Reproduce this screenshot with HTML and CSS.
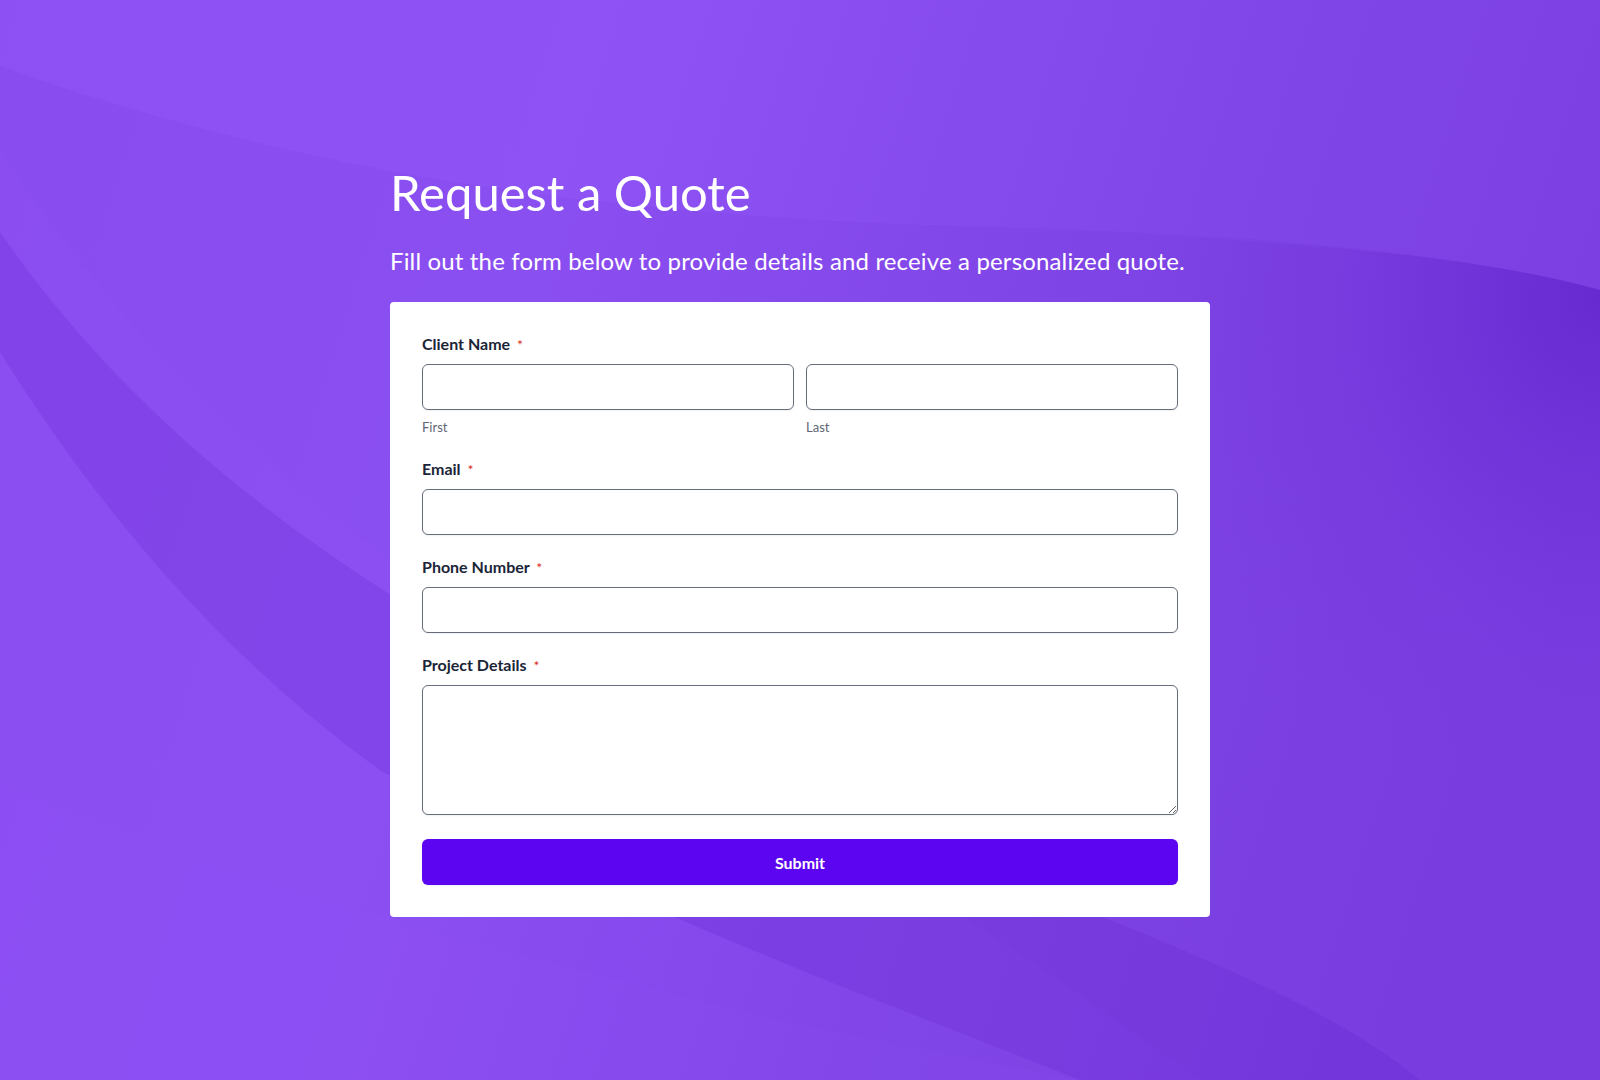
FILE: index.html
```html
<!DOCTYPE html>
<html lang="en">
<head>
    <meta charset="UTF-8">
    <title>Request a Quote</title>
    <link rel="stylesheet" href="styles.css">
</head>
<body>
    <!-- wavy purple backdrop, sits behind the page -->
    <svg class="backdrop" viewBox="0 0 1600 1080" preserveAspectRatio="none" aria-hidden="true">
        <defs>
            <linearGradient id="base" gradientUnits="userSpaceOnUse" x1="0" y1="0" x2="1600" y2="500">
                <stop offset="0" stop-color="#8d50f3"/>
                <stop offset="0.35" stop-color="#8f53f5"/>
                <stop offset="0.7" stop-color="#8247e8"/>
                <stop offset="1" stop-color="#7b3fe1"/>
            </linearGradient>
            <radialGradient id="rightGlow" gradientUnits="userSpaceOnUse" cx="1600" cy="300" r="520">
                <stop offset="0" stop-color="#6123cc" stop-opacity="0.75"/>
                <stop offset="0.5" stop-color="#6b2dd5" stop-opacity="0.3"/>
                <stop offset="1" stop-color="#7a3ee0" stop-opacity="0"/>
            </radialGradient>
        </defs>
        <rect width="1600" height="1080" fill="url(#base)"/>
        <!-- broad darker sweep under the top curve -->
        <path d="M0,66 C260,160 560,215 960,226 C1260,234 1460,252 1600,290 L1600,1080 L0,1080 Z" fill="#5a1cc4" opacity="0.07"/>
        <path d="M800,224 C1260,234 1460,252 1600,290 L1600,1080 L800,1080 Z" fill="url(#rightGlow)"/>
        <!-- light ribbon along the left edge -->
        <path d="M0,150 C120,330 260,470 420,580 C640,720 900,860 1200,1080 L0,1080 Z" fill="#9a5cff" opacity="0.10"/>
        <!-- dark diagonal band running from the left edge to the bottom -->
        <path d="M0,232 C150,450 400,640 800,800 C1050,900 1300,980 1420,1080 L1080,1080 C880,1000 600,900 380,770 C200,640 80,480 0,352 Z" fill="#5e20c6" opacity="0.2"/>
        <!-- soft lower sweep -->
        <path d="M0,780 C220,880 420,930 700,1000 C860,1040 980,1060 1080,1080 L0,1080 Z" fill="#9a5dff" opacity="0.08"/>
    </svg>

    <main class="page">
        <h1 class="page-title">Request a Quote</h1>
        <p class="page-intro">Fill out the form below to provide details and receive a personalized quote.</p>

        <form class="quote-card" id="quoteForm">
            <div class="field">
                <label class="field-label" for="firstName">Client Name <span class="req">*</span></label>
                <div class="name-row">
                    <div class="name-part">
                        <input class="text-input" type="text" id="firstName" name="firstName" required>
                        <span class="sub-label">First</span>
                    </div>
                    <div class="name-part">
                        <input class="text-input" type="text" id="lastName" name="lastName" required>
                        <span class="sub-label">Last</span>
                    </div>
                </div>
            </div>

            <div class="field">
                <label class="field-label" for="email">Email <span class="req">*</span></label>
                <input class="text-input" type="email" id="email" name="email" required>
            </div>

            <div class="field">
                <label class="field-label" for="phone">Phone Number <span class="req">*</span></label>
                <input class="text-input" type="tel" id="phone" name="phone" required>
            </div>

            <div class="field">
                <label class="field-label" for="details">Project Details <span class="req">*</span></label>
                <textarea class="text-input text-area" id="details" name="details" required></textarea>
            </div>

            <button class="submit-btn" type="submit">Submit</button>
        </form>
    </main>
</body>
</html>
```

FILE: styles.css
```css
html, body {
    margin: 0;
    height: 100%;
    font-family: Lato, "Open Sans", Arial, sans-serif;
}
body {
    position: relative;
    overflow: hidden;
    background: #8b4ef0;
}
.backdrop {
    position: absolute; /* decorative layer behind everything */
    top: 0;
    left: 0;
    width: 100%;
    height: 100%;
    z-index: 0;
}
.page {
    position: relative;
    z-index: 1;
    width: 820px;
    margin: 0 auto;
    padding-top: 162px;
}
.page-title {
    margin: 0;
    font-size: 49px;
    line-height: 60px;
    font-weight: 400;
    color: #fff;
}
.page-intro {
    margin: 23px 0 25px;
    font-size: 24px;
    line-height: 32px;
    letter-spacing: 0.15px;
    color: #fff;
}
.quote-card {
    background: #fff;
    border-radius: 4px;
    padding: 30px 32px 32px;
}
.field {
    margin-bottom: 20px;
}
.field-label {
    display: block;
    margin-bottom: 8px;
    font-size: 16px;
    line-height: 24px;
    font-weight: 700;
    color: #1b2537;
}
.req {
    color: #d92d20;
    font-size: 14px;
    line-height: 1;
    font-weight: 400;
    margin-left: 3px;
}
.name-row {
    display: grid;
    grid-template-columns: 1fr 1fr;
    gap: 12px;
}
.name-part {
    display: flex;
    flex-direction: column;
}
.sub-label {
    margin-top: 7px;
    font-size: 13px;
    line-height: 20px;
    color: #5f6675;
}
.text-input {
    display: block;
    box-sizing: border-box;
    width: 100%;
    height: 46px;
    margin: 0;
    padding: 10px 14px;
    border: 1px solid #666c7c;
    border-radius: 6px;
    background: #fff;
    box-shadow: 0 1px 2px rgba(16, 24, 40, 0.06);
    font-family: inherit;
    font-size: 16px;
    color: #1b2537;
}
.text-area {
    height: 130px;
    resize: vertical;
}
.submit-btn {
    display: block;
    width: 100%;
    height: 46px;
    margin-top: 24px;
    border: none;
    border-radius: 6px;
    background: #5c05f0;
    box-shadow: 0 1px 2px rgba(16, 24, 40, 0.06);
    color: #fff;
    font-family: inherit;
    font-size: 16px;
    font-weight: 700;
    cursor: pointer;
}
```
